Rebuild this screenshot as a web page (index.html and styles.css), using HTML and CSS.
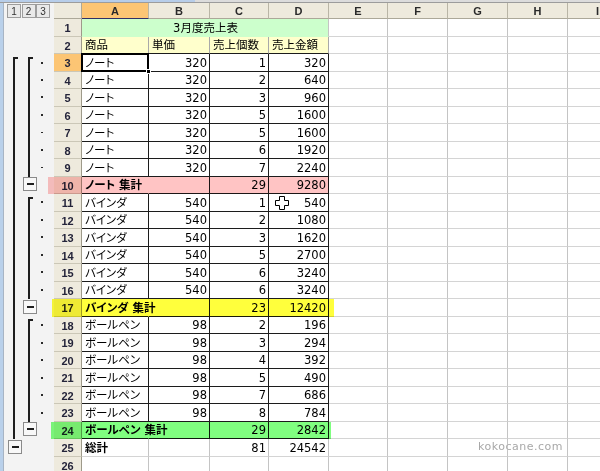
FILE: index.html
```html
<!DOCTYPE html>
<html lang="ja">
<head>
<meta charset="utf-8">
<title>3月度売上表</title>
<link rel="stylesheet" href="styles.css">
</head>
<body>
<div class="top"><div class="top-blue"></div></div>
<div class="main">
  <div class="strip"></div>
  <div class="gutter">
    <div class="btns"><span class="lb">1</span><span class="lb">2</span><span class="lb">3</span></div>
    <div class="br br1"></div>
    <div class="br br2 g1"></div>
    <div class="br br2 g2"></div>
    <div class="br br2 g3"></div>
    <div class="dots g1"></div>
    <div class="dots g2"></div>
    <div class="dots g3"></div>
    <div class="mb m2 r10"></div>
    <div class="mb m2 r17"></div>
    <div class="mb m2 r24"></div>
    <div class="mb m1 r25"></div>
  </div>
  <div class="sheet">
    <div class="corner"></div><div class="ch sel">A</div><div class="ch">B</div><div class="ch">C</div><div class="ch">D</div><div class="ch">E</div><div class="ch">F</div><div class="ch">G</div><div class="ch">H</div><div class="ch">I</div>

    <div class="rh">1</div><div class="c title">3月度売上表</div><div class="c"></div><div class="c"></div><div class="c"></div><div class="c"></div><div class="c"></div>
    <div class="rh">2</div><div class="c hd">商品</div><div class="c hd">単価</div><div class="c hd">売上個数</div><div class="c hd">売上金額</div><div class="c"></div><div class="c"></div><div class="c"></div><div class="c"></div><div class="c"></div>

    <div class="rh sel">3</div><div class="c t sc">ノート</div><div class="c t n">320</div><div class="c t n">1</div><div class="c t n">320</div><div class="c"></div><div class="c"></div><div class="c"></div><div class="c"></div><div class="c"></div>
    <div class="rh">4</div><div class="c t">ノート</div><div class="c t n">320</div><div class="c t n">2</div><div class="c t n">640</div><div class="c"></div><div class="c"></div><div class="c"></div><div class="c"></div><div class="c"></div>
    <div class="rh">5</div><div class="c t">ノート</div><div class="c t n">320</div><div class="c t n">3</div><div class="c t n">960</div><div class="c"></div><div class="c"></div><div class="c"></div><div class="c"></div><div class="c"></div>
    <div class="rh">6</div><div class="c t">ノート</div><div class="c t n">320</div><div class="c t n">5</div><div class="c t n">1600</div><div class="c"></div><div class="c"></div><div class="c"></div><div class="c"></div><div class="c"></div>
    <div class="rh">7</div><div class="c t">ノート</div><div class="c t n">320</div><div class="c t n">5</div><div class="c t n">1600</div><div class="c"></div><div class="c"></div><div class="c"></div><div class="c"></div><div class="c"></div>
    <div class="rh">8</div><div class="c t">ノート</div><div class="c t n">320</div><div class="c t n">6</div><div class="c t n">1920</div><div class="c"></div><div class="c"></div><div class="c"></div><div class="c"></div><div class="c"></div>
    <div class="rh">9</div><div class="c t">ノート</div><div class="c t n">320</div><div class="c t n">7</div><div class="c t n">2240</div><div class="c"></div><div class="c"></div><div class="c"></div><div class="c"></div><div class="c"></div>
    <div class="rh">10</div><div class="c t b ov">ノート 集計</div><div class="c t"></div><div class="c t n">29</div><div class="c t n">9280</div><div class="c"></div><div class="c"></div><div class="c"></div><div class="c"></div><div class="c"></div>

    <div class="rh">11</div><div class="c t">バインダ</div><div class="c t n">540</div><div class="c t n">1</div><div class="c t n">540</div><div class="c"></div><div class="c"></div><div class="c"></div><div class="c"></div><div class="c"></div>
    <div class="rh">12</div><div class="c t">バインダ</div><div class="c t n">540</div><div class="c t n">2</div><div class="c t n">1080</div><div class="c"></div><div class="c"></div><div class="c"></div><div class="c"></div><div class="c"></div>
    <div class="rh">13</div><div class="c t">バインダ</div><div class="c t n">540</div><div class="c t n">3</div><div class="c t n">1620</div><div class="c"></div><div class="c"></div><div class="c"></div><div class="c"></div><div class="c"></div>
    <div class="rh">14</div><div class="c t">バインダ</div><div class="c t n">540</div><div class="c t n">5</div><div class="c t n">2700</div><div class="c"></div><div class="c"></div><div class="c"></div><div class="c"></div><div class="c"></div>
    <div class="rh">15</div><div class="c t">バインダ</div><div class="c t n">540</div><div class="c t n">6</div><div class="c t n">3240</div><div class="c"></div><div class="c"></div><div class="c"></div><div class="c"></div><div class="c"></div>
    <div class="rh">16</div><div class="c t">バインダ</div><div class="c t n">540</div><div class="c t n">6</div><div class="c t n">3240</div><div class="c"></div><div class="c"></div><div class="c"></div><div class="c"></div><div class="c"></div>
    <div class="rh">17</div><div class="c t b ov">バインダ 集計</div><div class="c t"></div><div class="c t n">23</div><div class="c t n">12420</div><div class="c"></div><div class="c"></div><div class="c"></div><div class="c"></div><div class="c"></div>

    <div class="rh">18</div><div class="c t">ボールペン</div><div class="c t n">98</div><div class="c t n">2</div><div class="c t n">196</div><div class="c"></div><div class="c"></div><div class="c"></div><div class="c"></div><div class="c"></div>
    <div class="rh">19</div><div class="c t">ボールペン</div><div class="c t n">98</div><div class="c t n">3</div><div class="c t n">294</div><div class="c"></div><div class="c"></div><div class="c"></div><div class="c"></div><div class="c"></div>
    <div class="rh">20</div><div class="c t">ボールペン</div><div class="c t n">98</div><div class="c t n">4</div><div class="c t n">392</div><div class="c"></div><div class="c"></div><div class="c"></div><div class="c"></div><div class="c"></div>
    <div class="rh">21</div><div class="c t">ボールペン</div><div class="c t n">98</div><div class="c t n">5</div><div class="c t n">490</div><div class="c"></div><div class="c"></div><div class="c"></div><div class="c"></div><div class="c"></div>
    <div class="rh">22</div><div class="c t">ボールペン</div><div class="c t n">98</div><div class="c t n">7</div><div class="c t n">686</div><div class="c"></div><div class="c"></div><div class="c"></div><div class="c"></div><div class="c"></div>
    <div class="rh">23</div><div class="c t">ボールペン</div><div class="c t n">98</div><div class="c t n">8</div><div class="c t n">784</div><div class="c"></div><div class="c"></div><div class="c"></div><div class="c"></div><div class="c"></div>
    <div class="rh">24</div><div class="c t b ov">ボールペン 集計</div><div class="c t"></div><div class="c t n">29</div><div class="c t n">2842</div><div class="c"></div><div class="c"></div><div class="c"></div><div class="c"></div><div class="c"></div>

    <div class="rh">25</div><div class="c b">総計</div><div class="c"></div><div class="c n">81</div><div class="c n">24542</div><div class="c"></div><div class="c"></div><div class="c"></div><div class="c"></div><div class="c"></div>
    <div class="rh">26</div><div class="c"></div><div class="c"></div><div class="c"></div><div class="c"></div><div class="c"></div><div class="c"></div><div class="c"></div><div class="c"></div><div class="c"></div>

    <div class="hl hl-pink"></div>
    <div class="hl hl-yellow"></div>
    <div class="hl hl-green"></div>

    <svg class="cursor" width="14" height="14" viewBox="0 0 14 14">
      <polygon points="4.5,0.5 9.5,0.5 9.5,4.5 13.5,4.5 13.5,9.5 9.5,9.5 9.5,13.5 4.5,13.5 4.5,9.5 0.5,9.5 0.5,4.5 4.5,4.5" fill="#fff" stroke="#000" stroke-width="1"/>
    </svg>
    <div class="wm">kokocane.com</div>
  </div>
</div>
</body>
</html>
```

FILE: styles.css
```css
html, body {
  margin: 0;
  padding: 0;
  overflow: hidden;
  background: #fff;
}
body {
  width: 600px;
  height: 471px;
  font-family: "DejaVu Sans", "Noto Sans CJK JP", sans-serif;
}

.top {
  height: 2px;
  background: #dcdcdc;
  border-bottom: 1px solid #9c9c9c;
  display: flex;
}
.top-blue {
  width: 195px;
  background: #b7cde9;
}

.main {
  display: flex;
  align-items: flex-start;
}

.strip {
  flex: none;
  box-sizing: border-box;
  width: 4px;
  height: 468px;
  background: #b9d0ea;
  border-right: 1px solid #a7b4c4;
}

/* outline gutter */
.gutter {
  flex: none;
  width: 50px;
  height: 468px;
  background: #f3f3f3;
  display: grid;
  grid-template-columns: 19px 15px 16px;
  grid-template-rows: 16px repeat(26, 17.5px);
}
.btns {
  grid-column: 1 / 4;
  grid-row: 1;
  display: flex;
  gap: 0.5px;
  padding-left: 3px;
  align-items: center;
}
.lb {
  box-sizing: border-box;
  width: 14px;
  height: 14px;
  border: 1px solid #9d9d9d;
  background: #e9e9e9;
  font: 10px "Liberation Sans", sans-serif;
  color: #333;
  display: flex;
  align-items: center;
  justify-content: center;
}

.br {
  box-sizing: border-box;
  width: 5px;
  margin-top: 2.5px;
  border-left: 2px solid #1e1e1e;
  border-top: 2px solid #1e1e1e;
}
.br1 {
  grid-column: 1;
  grid-row: 4 / 26;
  margin-left: 9px;
}
.br2 {
  grid-column: 2;
  margin-left: 5px;
}
.g1 { grid-row: 4 / 11; }
.g2 { grid-row: 12 / 18; }
.g3 { grid-row: 19 / 25; }

.dots {
  grid-column: 3;
  background-image: repeating-linear-gradient(to bottom, transparent 0, transparent 7.5px, #2a2a2a 7.5px, #2a2a2a 9.5px, transparent 9.5px, transparent 17.5px);
  background-size: 2px 100%;
  background-position: 3px 0;
  background-repeat: no-repeat;
}

.mb {
  box-sizing: border-box;
  width: 14px;
  height: 14px;
  margin-top: 0.5px;
  border: 1px solid #8a8a8a;
  background: #f8f8f8;
  display: flex;
  align-items: center;
  justify-content: center;
}
.mb::before {
  content: "";
  width: 7px;
  height: 2px;
  background: #1e1e1e;
}
.m2 { grid-column: 2; }
.m1 { grid-column: 1; margin-left: 4px; }
.r10 { grid-row: 11; }
.r17 { grid-row: 18; }
.r24 { grid-row: 25; }
.r25 { grid-row: 26; }

/* sheet */
.sheet {
  flex: none;
  position: relative;
  display: grid;
  grid-template-columns: 28px 67px 61px 59px 60px 59px 60px 60px 60px 60px;
  grid-template-rows: 16px repeat(26, 17.5px);
  font-size: 11.5px;
  font-feature-settings: "palt";
  color: #000;
}

.corner, .ch, .rh, .c {
  box-sizing: border-box;
  display: flex;
  align-items: center;
  white-space: nowrap;
  min-width: 0;
  line-height: 14px;
}

.corner {
  background: #eeeadd;
  border-right: 1px solid #aca899;
  border-bottom: 1px solid #aca899;
}
.ch {
  background: #eeeadd;
  border-right: 1px solid #b9b5a6;
  border-bottom: 1px solid #aca899;
  justify-content: center;
  font: bold 11px "Liberation Sans", sans-serif;
  color: #2a2a2a;
}
.ch.sel {
  background: #fcc574;
  border-bottom-color: #2f2f66;
}
.rh {
  background: #eeeadd;
  border-right: 1px solid #9e9a8a;
  border-bottom: 1px solid #cbc7b7;
  justify-content: center;
  padding-top: 2px;
  font: bold 11px "Liberation Sans", sans-serif;
  color: #24243a;
}
.rh.sel {
  background: #fcc574;
  border-right-color: #2f2f66;
}

.c {
  border-right: 1px solid #c4c4c4;
  border-bottom: 1px solid #d4d4d4;
  padding: 1px 2px 0 3px;
  overflow: hidden;
}
.t {
  border-right-color: #1c1c1c;
  border-bottom-color: #1c1c1c;
}
.n { justify-content: flex-end; }
.b { font-weight: bold; }
.ov {
  overflow: visible;
  border-right-color: transparent;
}

.title {
  grid-column: span 4;
  background: #ccffcc;
  justify-content: center;
  border-bottom-color: #ccffcc;
}
.hd {
  background: #ffffcc;
  border-right-color: #a9a9a9;
  border-bottom-color: #1c1c1c;
}

/* active cell A3 */
.sc {
  position: relative;
  overflow: visible;
}
.sc::after {
  content: "";
  position: absolute;
  left: -1px;
  top: -1px;
  right: -1px;
  bottom: -1px;
  border: 2px solid #000;
}
.sc::before {
  content: "";
  position: absolute;
  right: -3px;
  bottom: -3px;
  width: 3px;
  height: 3px;
  background: #000;
  border: 1px solid #fff;
  z-index: 2;
}

/* highlighter overlays */
.hl {
  position: absolute;
  height: 17.5px;
  mix-blend-mode: multiply;
  z-index: 3;
}
.hl-pink {
  left: -6px;
  top: 173.5px;
  width: 281px;
  background: #ffc4c4;
}
.hl-yellow {
  left: -2px;
  top: 296px;
  width: 282px;
  background: #ffff3c;
}
.hl-green {
  left: -3px;
  top: 418.5px;
  width: 280px;
  background: #80ff80;
}

.cursor {
  position: absolute;
  left: 221px;
  top: 193px;
  z-index: 4;
}

.wm {
  position: absolute;
  left: 424px;
  top: 437px;
  font: 11px "DejaVu Sans", sans-serif;
  letter-spacing: 0.5px;
  color: #a8a8a8;
  text-shadow: 0 0 1px #fff;
  z-index: 4;
}
```
